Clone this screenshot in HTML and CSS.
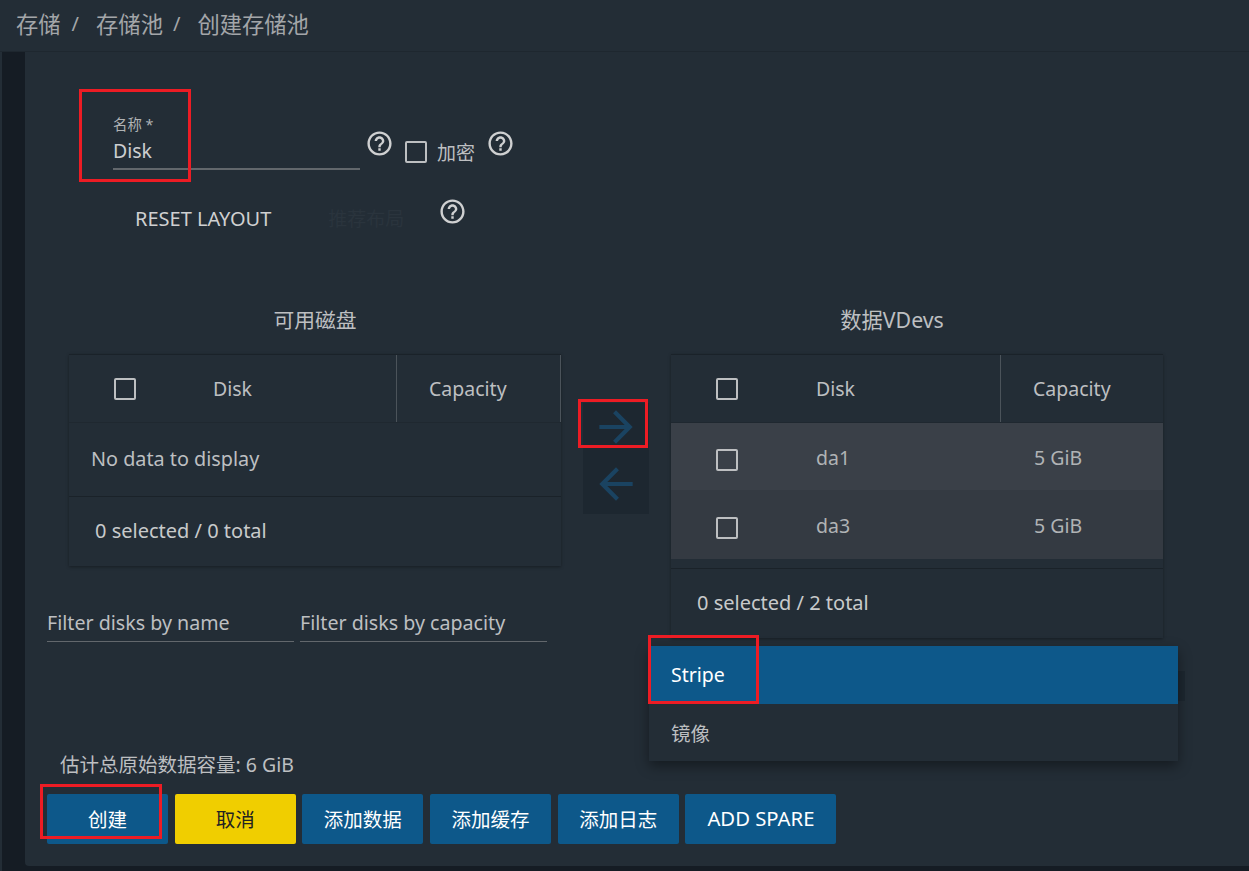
FILE: index.html
```html
<!DOCTYPE html>
<html lang="zh">
<head>
<meta charset="utf-8">
<title>创建存储池</title>
<link rel="stylesheet" href="styles.css">
</head>
<body>
<header class="crumbs">
  <span>存储</span><span class="sep">/</span><span>存储池</span><span class="sep sep-2">/</span><span>创建存储池</span>
</header>
<div class="shell">
  <aside class="rail"></aside>
  <main class="card">
    <section class="name-row">
      <div class="field">
        <div class="field-label">名称 *</div>
        <div class="field-value">Disk</div>
      </div>
      <svg class="help help-a" viewBox="0 0 24 24"><path d="M11 18h2v-2h-2v2zm1-16C6.48 2 2 6.48 2 12s4.48 10 10 10 10-4.48 10-10S17.52 2 12 2zm0 18c-4.41 0-8-3.59-8-8s3.59-8 8-8 8 3.59 8 8-3.59 8-8 8zm0-14c-2.21 0-4 1.79-4 4h2c0-1.1.9-2 2-2s2 .9 2 2c0 2-3 1.75-3 5h2c0-2.25 3-2.5 3-5 0-2.21-1.79-4-4-4z"/></svg>
      <span class="check check-enc"></span>
      <span class="enc-label">加密</span>
      <svg class="help help-b" viewBox="0 0 24 24"><path d="M11 18h2v-2h-2v2zm1-16C6.48 2 2 6.48 2 12s4.48 10 10 10 10-4.48 10-10S17.52 2 12 2zm0 18c-4.41 0-8-3.59-8-8s3.59-8 8-8 8 3.59 8 8-3.59 8-8 8zm0-14c-2.21 0-4 1.79-4 4h2c0-1.1.9-2 2-2s2 .9 2 2c0 2-3 1.75-3 5h2c0-2.25 3-2.5 3-5 0-2.21-1.79-4-4-4z"/></svg>
    </section>

    <section class="reset-row">
      <span class="reset">RESET LAYOUT</span>
      <span class="suggest">推荐布局</span>
      <svg class="help help-c" viewBox="0 0 24 24"><path d="M11 18h2v-2h-2v2zm1-16C6.48 2 2 6.48 2 12s4.48 10 10 10 10-4.48 10-10S17.52 2 12 2zm0 18c-4.41 0-8-3.59-8-8s3.59-8 8-8 8 3.59 8 8-3.59 8-8 8zm0-14c-2.21 0-4 1.79-4 4h2c0-1.1.9-2 2-2s2 .9 2 2c0 2-3 1.75-3 5h2c0-2.25 3-2.5 3-5 0-2.21-1.79-4-4-4z"/></svg>
    </section>

    <section class="columns">
      <div class="col">
        <h2 class="col-title">可用磁盘</h2>
        <div class="table">
          <div class="thead">
            <div class="th th-disk th-disk-l"><span class="check"></span><span class="th-name th-name-l">Disk</span></div>
            <div class="th th-cap th-cap-l">Capacity</div>
          </div>
          <div class="empty">No data to display</div>
          <div class="tfoot tfoot-l">0 selected / 0 total</div>
        </div>
        <div class="filters">
          <div class="filter">Filter disks by name</div>
          <div class="filter">Filter disks by capacity</div>
        </div>
      </div>

      <div class="arrows">
        <button class="arrow arrow-fwd"><svg viewBox="0 0 24 24"><path d="M12 4l-1.41 1.41L16.17 11H4v2h12.17l-5.58 5.59L12 20l8-8z"/></svg></button>
        <button class="arrow arrow-back"><svg viewBox="0 0 24 24"><path d="M20 11H7.83l5.59-5.59L12 4l-8 8 8 8 1.41-1.41L7.83 13H20v-2z"/></svg></button>
      </div>

      <div class="col">
        <h2 class="col-title col-title-r">数据VDevs</h2>
        <div class="table">
          <div class="thead">
            <div class="th th-disk th-disk-r"><span class="check"></span><span class="th-name th-name-r">Disk</span></div>
            <div class="th th-cap-r">Capacity</div>
          </div>
          <div class="tr tr-a"><span class="check"></span><span class="td-name">da1</span><span class="td-cap">5 GiB</span></div>
          <div class="tr tr-b"><span class="check"></span><span class="td-name">da3</span><span class="td-cap">5 GiB</span></div>
          <div class="tfoot tfoot-r">0 selected / 2 total</div>
        </div>
      </div>
    </section>

    <p class="estimate">估计总原始数据容量: 6 GiB</p>

    <section class="actions">
      <button class="btn btn-blue">创建</button>
      <button class="btn btn-yellow">取消</button>
      <button class="btn btn-blue">添加数据</button>
      <button class="btn btn-blue">添加缓存</button>
      <button class="btn btn-blue">添加日志</button>
      <button class="btn btn-blue btn-wide">ADD SPARE</button>
    </section>
  </main>
</div>

<div class="behind-menu"></div>
<div class="menu">
  <div class="menu-item menu-active">Stripe</div>
  <div class="menu-item">镜像</div>
</div>

<div class="mark mark-name"></div>
<div class="mark mark-arrow"></div>
<div class="mark mark-stripe"></div>
<div class="mark mark-create"></div>
</body>
</html>
```

FILE: styles.css
```css
* { box-sizing: border-box; }

html, body {
  margin: 0;
  height: 871px;
  overflow: hidden;
}

body {
  position: relative;
  background: #232d36;
  color: #bdbfc1;
  font-family: "Noto Sans", "Noto Sans CJK SC", sans-serif;
  font-size: 19.5px;
}

.crumbs {
  height: 52px;
  display: flex;
  align-items: center;
  padding: 0 0 5px 16px;
  border-bottom: 1px solid #1e272f;
  font-size: 22.3px;
  color: #a3a6a9;
}

.sep {
  font-size: 20px;
  margin: 0 17px 0 11px;
}

.sep-2 { margin-left: 10px; }

.shell {
  display: flex;
  height: 819px;
  margin-left: 2px;
  background: #151c24;
}

.rail {
  width: 23px;
  flex: none;
}

.card {
  flex: 1;
  height: 814px;
  padding-left: 22px;
  background: #232d36;
  border-radius: 0 0 0 4px;
}

.name-row {
  display: flex;
  align-items: flex-start;
  height: 132px;
  padding: 65px 0 0 66px;
}

.field {
  width: 247px;
  height: 53px;
  border-bottom: 2px solid #62676c;
}

.field-label {
  font-size: 14.4px;
  line-height: 16px;
  color: #b0b3b5;
}

.field-value {
  margin-top: 5px;
  font-size: 19.5px;
  line-height: 26px;
  color: #ccced0;
}

.help {
  width: 29px;
  height: 29px;
  fill: #cfd0d1;
  flex: none;
}

.help-a { margin: 12px 0 0 5px; }
.help-b { margin: 12px 0 0 11px; }
.help-c { margin: -14px 0 0 34px; }

.check {
  display: block;
  width: 22px;
  height: 22px;
  border: 2px solid #bdbfc1;
  border-radius: 2px;
  flex: none;
}

.check-enc { margin: 24px 0 0 11px; }

.enc-label {
  margin: 22px 0 0 10px;
  font-size: 19px;
  line-height: 28px;
}

.reset-row {
  display: flex;
  align-items: center;
  height: 70px;
  padding: 0 0 2px 88px;
}

.reset {
  font-size: 20px;
  color: #cfd0d1;
}

.suggest {
  margin-left: 57px;
  font-size: 19px;
  color: #2a343d;
}

.columns {
  display: flex;
  align-items: flex-start;
  margin: 66px 0 0 22px;
}

.col { width: 492px; flex: none; }

.col-title {
  margin: -12px 0 0;
  height: 46px;
  font-size: 20.8px;
  font-weight: 400;
  line-height: 24px;
  text-align: center;
  color: #bdbfc1;
}

.col-title-r { padding-right: 50px; font-size: 21.3px; }

.table {
  border-top: 1px solid #1a2229;
  box-shadow: 0 1px 3px rgba(0, 0, 0, .35);
}

.thead {
  display: flex;
  height: 68px;
  border-bottom: 1px solid #1f2830;
}

.th {
  display: flex;
  align-items: center;
  height: 67px;
}

.th-disk { padding-left: 45px; }
.th-disk-l { width: 328px; border-right: 1px solid #4b535a; }
.th-disk-r { width: 330px; border-right: 1px solid #4b535a; }
.th-cap-l { width: 164px; padding-left: 32px; border-right: 1px solid #4b535a; }
.th-cap-r { padding-left: 32px; }
.th-name-l { margin-left: 77px; }
.th-name-r { margin-left: 78px; }

.empty {
  height: 74px;
  display: flex;
  align-items: center;
  padding: 0 0 2px 22px;
  font-size: 19.8px;
  border-bottom: 1px solid #1a2229;
}

.tfoot {
  display: flex;
  align-items: center;
  padding-bottom: 2px;
  font-size: 20px;
  color: #c8cacb;
}

.tfoot-l { height: 69px; padding-left: 26px; }
.tfoot-r { height: 70px; margin-top: 9px; padding-left: 26px; border-top: 1px solid #1a2229; }

.tr {
  display: flex;
  align-items: center;
  padding: 2px 0 0 45px;
  color: #b0b3b5;
}

.tr .check { margin-top: 4px; }

.tr-a { height: 67px; background: #3a4048; }
.tr-b { height: 69px; background: #343a42; }

.td-name { margin-left: 78px; width: 218px; }

.arrows {
  width: 110px;
  flex: none;
  padding: 83px 22px 0 22px;
}

.arrow {
  display: flex;
  align-items: center;
  justify-content: center;
  width: 66px;
  padding: 0;
  border: 0;
  background: #1d2730;
}

.arrow svg {
  width: 50px;
  height: 50px;
  flex: none;
  fill: #1a4361;
}

.arrow-fwd { height: 47px; }
.arrow-back { height: 64px; padding-top: 4px; }

.filters {
  display: flex;
  gap: 6px;
  margin: 44px 0 0 -22px;
}

.filter {
  width: 247px;
  height: 32px;
  flex: none;
  font-size: 19.65px;
  line-height: 26px;
  border-bottom: 1px solid #62676c;
  color: #bdbfc1;
}

.estimate {
  margin: 110px 0 0 13px;
  height: 42px;
  line-height: 26px;
  color: #bdbfc1;
}

.actions {
  display: flex;
  gap: 6.7px;
}

.btn {
  width: 121px;
  height: 50px;
  padding: 0 0 2px;
  border: 0;
  border-radius: 2px;
  font-family: inherit;
  font-size: 19.5px;
}

.btn-blue { background: #0d588a; color: #fff; }
.btn-yellow { background: #f0ce00; color: #222; }
.btn-wide { width: 151px; font-size: 20.3px; }

.behind-menu {
  position: absolute;
  left: 1178px;
  top: 671px;
  width: 7px;
  height: 30px;
  background: #1d2730;
}

.menu {
  position: absolute;
  left: 649px;
  top: 646px;
  width: 529px;
  background: #232d36;
  box-shadow: 0 5px 12px rgba(0, 0, 0, .4);
}

.menu-item {
  height: 57.5px;
  display: flex;
  align-items: center;
  padding-left: 22px;
  color: #bdbfc1;
}

.menu-active { background: #0d588a; color: #fff; }

.mark {
  position: absolute;
  border: 3px solid #ed1c24;
}

.mark-name { left: 79px; top: 89px; width: 112px; height: 93px; }
.mark-arrow { left: 578px; top: 399px; width: 70px; height: 49px; }
.mark-stripe { left: 648px; top: 635px; width: 111px; height: 69px; }
.mark-create { left: 40px; top: 784px; width: 122px; height: 55px; }
```
